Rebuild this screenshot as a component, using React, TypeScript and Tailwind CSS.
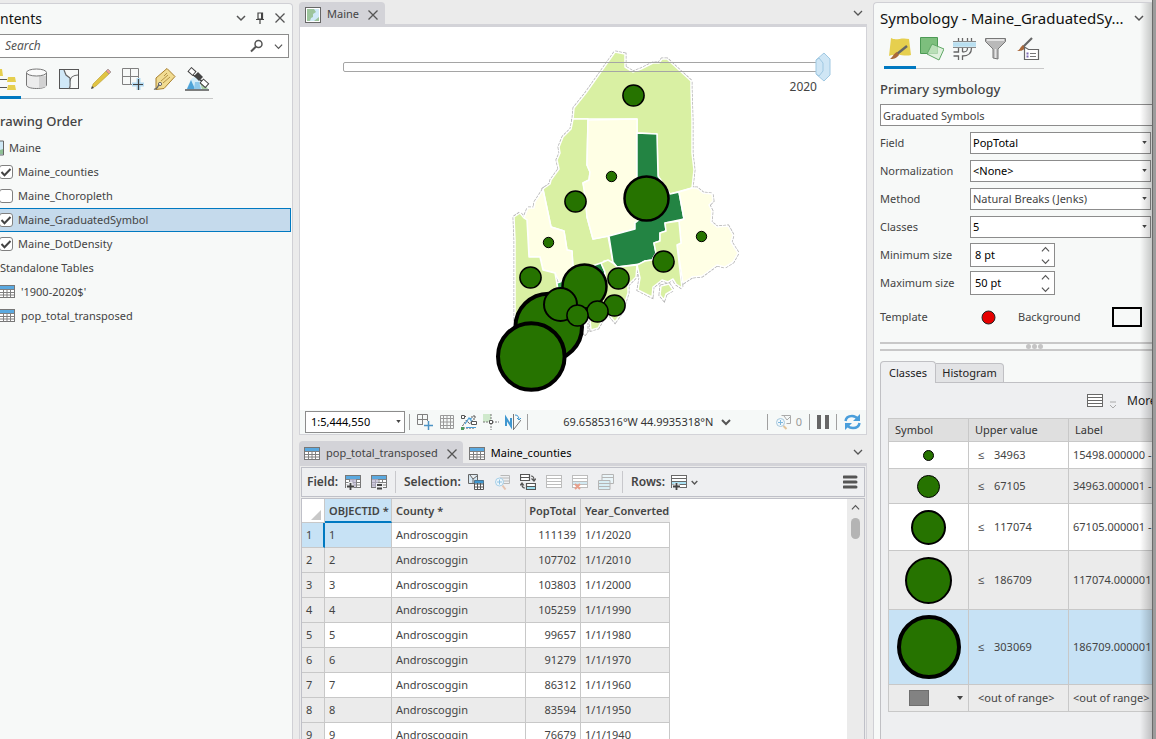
import type { ReactNode } from "react";

type Circle = { cx: number; cy: number; r: number; w: number };

const LAYERS = [
  { name: "Maine_counties", visible: true, selected: false },
  { name: "Maine_Choropleth", visible: false, selected: false },
  { name: "Maine_GraduatedSymbol", visible: true, selected: true },
  { name: "Maine_DotDensity", visible: true, selected: false },
];

const TABLES = ["'1900-2020$'", "pop_total_transposed"];

const ROWS = [
  { total: "111139", date: "1/1/2020" },
  { total: "107702", date: "1/1/2010" },
  { total: "103803", date: "1/1/2000" },
  { total: "105259", date: "1/1/1990" },
  { total: "99657", date: "1/1/1980" },
  { total: "91279", date: "1/1/1970" },
  { total: "86312", date: "1/1/1960" },
  { total: "83594", date: "1/1/1950" },
  { total: "76679", date: "1/1/1940" },
];

const CLASSES = [
  { size: 11, stroke: 1, upper: "34963", label: "15498.000000 - 34963.000000", row: "h-[27px] bg-white" },
  { size: 23, stroke: 1, upper: "67105", label: "34963.000001 - 67105.000000", row: "h-[35px] bg-[#ebebeb]" },
  { size: 35, stroke: 2, upper: "117074", label: "67105.000001 - 117074.000000", row: "h-[47px] bg-white" },
  { size: 47, stroke: 2, upper: "186709", label: "117074.000001 - 186709.000000", row: "h-[59px] bg-[#ebebeb]" },
  { size: 64, stroke: 4, upper: "303069", label: "186709.000001 - 303069.000000", row: "h-[75px] bg-[#c7e2f5]" },
];

const CIRCLES: Circle[] = [
  { cx: 633.5, cy: 95.5, r: 10.6, w: 1.5 },
  { cx: 611.5, cy: 176.5, r: 5.2, w: 1 },
  { cx: 646.5, cy: 198.5, r: 22, w: 2.5 },
  { cx: 575.5, cy: 201.5, r: 10.6, w: 1.5 },
  { cx: 548.5, cy: 242.5, r: 5.2, w: 1 },
  { cx: 701.5, cy: 236.5, r: 5.2, w: 1 },
  { cx: 663.5, cy: 261.5, r: 10.6, w: 1.5 },
  { cx: 530.5, cy: 277.5, r: 10.6, w: 1.5 },
  { cx: 618.5, cy: 278.5, r: 10.6, w: 1.5 },
  { cx: 548.7, cy: 327, r: 33.3, w: 4 },
  { cx: 584.5, cy: 286.5, r: 22, w: 2.5 },
  { cx: 560.5, cy: 304.5, r: 16.5, w: 2 },
  { cx: 614.5, cy: 305.5, r: 10.6, w: 1.5 },
  { cx: 597.5, cy: 311.5, r: 10.6, w: 1.5 },
  { cx: 577.5, cy: 315.5, r: 10.6, w: 1.5 },
  { cx: 531.3, cy: 356.5, r: 33.3, w: 4 },
];

const COUNTIES = [
  // Aroostook
  { fill: "#d9f0a3", points: "615,52 625,54 625,67 633,72 641,69 653,63 659,63 662,59 667,59 691,81 691,88 692,120 692,153 694,170 692,188 670,194 658,176 657,134 637,133 637,119 573,119 574,108 586,93" },
  // Somerset
  { fill: "#d9f0a3", points: "573,119 588,119 587,165 590,172 589,180 583,183 587,200 587,217 593,239 608,236 613,262 604,261 602,272 573,268 572,251 567,250 564,231 551,227 543,189 550,184 551,180 559,169 557,160 560,153 559,147 563,137 571,129" },
  // Piscataquis
  { fill: "#ffffe5", points: "588,120 637,119 637,200 650,215 635,223 635,229 609,236 593,239 587,217 584,190 583,183 589,180 590,172 587,165" },
  // Penobscot
  { fill: "#238443", points: "637,133 657,134 658,176 670,194 679,192 684,219 665,223 666,231 660,233 660,241 654,243 656,253 652,260 645,261 640,264 617,267 613,262 609,236 635,229 635,223 645,215 637,200" },
  // Washington
  { fill: "#ffffe5", points: "679,192 692,188 697,188 703,193 712,194 713,201 709,205 712,211 711,222 717,227 728,226 733,235 731,242 738,253 733,262 725,267 717,265 702,276 692,277 683,283 677,245 681,243 679,221 684,219" },
  // Hancock
  { fill: "#d9f0a3", points: "665,223 679,221 681,243 677,245 682,288 676,284 673,279 668,282 662,280 653,287 652,297 638,290 640,278 637,265 645,261 652,260 656,253 654,243 660,241 660,233 666,231" },
  { fill: "#d9f0a3", points: "661,286 669,284 673,290 666,294 664,300 660,295" },
  // Franklin
  { fill: "#ffffe5", points: "543,190 551,227 564,231 567,250 572,251 573,268 560,283 555,273 543,270 540,257 529,257 527,220 524,218 528,208 534,208 535,202" },
  // Oxford
  { fill: "#d9f0a3", points: "514,217 520,213 524,218 527,220 529,257 540,257 543,270 555,273 559,295 540,330 515,320 515,240" },
  { fill: "#41ab5d", points: "557,283 563,281 566,290 558,290" },
  // Kennebec
  { fill: "#238443", points: "586,268 601,263 605,272 600,285 586,285" },
  // Waldo, Knox and Lincoln
  { fill: "#d9f0a3", points: "601,263 608,260 613,263 617,267 637,265 636,277 628,285 628,293 622,312 615,322 607,312 598,328 591,330 589,310 606,285 605,272" },
];

function Svg({ w = 16, h = 16, children }: { w?: number; h?: number; children: ReactNode }) {
  return (
    <svg width={w} height={h} viewBox={`0 0 ${w} ${h}`} fill="none" className="block shrink-0" aria-hidden="true">
      {children}
    </svg>
  );
}

function Chevron({ size = 10, up = false, width = 1.5 }: { size?: number; up?: boolean; width?: number }) {
  return (
    <svg width={size} height={size} viewBox="0 0 10 10" fill="none" stroke="#555" strokeWidth={width} className="block shrink-0" aria-hidden="true">
      <path d={up ? "M1 7l4-4 4 4" : "M1 3l4 4 4-4"} />
    </svg>
  );
}

function CloseIcon() {
  return (
    <Svg w={12} h={12}>
      <path d="M1.5 1.5l9 9M10.5 1.5l-9 9" stroke="#555" strokeWidth="1.3" />
    </Svg>
  );
}

function TableIcon({ children }: { children?: ReactNode }) {
  return (
    <Svg>
      <rect x=".5" y="1.5" width="15" height="12" fill="#fff" stroke="#777" />
      <rect x="1" y="2" width="14" height="3" fill="#5aa9e0" />
      <path d="M1 5.5h14M1 8.500h14M1 11h14M4.5 5v8.500M8 5v8.500M11.5 5v8.500" stroke="#808080" strokeWidth="1" />
      {children}
    </Svg>
  );
}

function ListIcon({ fill = "#fff", stroke = "#696969", children }: { fill?: string; stroke?: string; children?: ReactNode }) {
  return (
    <Svg>
      <rect x=".5" y="1.5" width="15" height="12" fill="#fff" stroke={stroke} />
      <rect x="1" y="8" width="14" height="3" fill={fill} />
      <path d="M1 4.5h14M1 7.5h14M1 10.5h14" stroke={stroke} />
      {children}
    </Svg>
  );
}

function GridPlusIcon() {
  return (
    <Svg w={24} h={24}>
      <path d="M2.5 1.5h16v16h-16zM10.5 1.5v16M2.5 9.5h16" stroke="#808080" />
      <path d="M12 17.5h12M18.5 11v12" stroke="#b5dcf3" strokeWidth="4" />
      <path d="M13 17.5h10M18.5 12v11" stroke="#444" strokeWidth="1.2" />
    </Svg>
  );
}

function IconButton({ label, children }: { label: string; children: ReactNode }) {
  return (
    <button type="button" aria-label={label} className="flex shrink-0 items-center justify-center">
      {children}
    </button>
  );
}

function Check({ id, checked }: { id: string; checked: boolean }) {
  return (
    <span className="-ml-px grid size-[14px] shrink-0 place-items-center">
      <input
        id={id}
        type="checkbox"
        defaultChecked={checked}
        className="peer col-start-1 row-start-1 size-[14px] appearance-none rounded-[3px] border border-[#808080] bg-white"
      />
      <svg width="12" height="12" viewBox="0 0 12 12" fill="none" stroke="#444" strokeWidth="2" className="pointer-events-none invisible col-start-1 row-start-1 peer-checked:visible">
        <path d="M1.5 6l3 3.2L10.5 3" />
      </svg>
    </span>
  );
}

function Contents() {
  return (
    <aside className="mt-[3px] flex w-[293px] shrink-0 flex-col overflow-hidden rounded-tr border-t border-r border-[#d0d0d5] bg-[#f7f9f8]">
      <div className="flex h-[30px] items-center pb-[2px]">
        <h2 className="flex-1 text-[14px] text-[#111]">ntents</h2>
        <div className="flex items-center gap-[9px] pr-[6px]">
          <IconButton label="Pane options"><Chevron /></IconButton>
          <IconButton label="Pin">
            <Svg w={10} h={12}>
              <path d="M3 1h4.5v6H3zM1 7.500h8M5 8v4" stroke="#444" strokeWidth="1.2" />
              <path d="M6 1h1.5v6H6z" fill="#444" />
            </Svg>
          </IconButton>
          <IconButton label="Close"><CloseIcon /></IconButton>
        </div>
      </div>

      <div className="mr-[3px] flex h-6 items-center border border-l-0 border-[#8c8c8c] bg-white pr-[5px]">
        <input aria-label="Search" placeholder="Search" className="min-w-0 flex-1 px-[5px] text-[12px] italic outline-none placeholder:text-[#555]" />
        <IconButton label="Search">
          <Svg w={14} h={14}>
            <circle cx="8.5" cy="5" r="3.5" stroke="#555" strokeWidth="1.5" />
            <path d="M6 7.500l-5 5" stroke="#555" strokeWidth="2" />
          </Svg>
        </IconButton>
        <span className="w-[10px]" />
        <IconButton label="Search options"><Chevron size={9} width={1.3} /></IconButton>
      </div>

      <div className="mt-[9px] flex w-[213px] gap-2 border-b border-[#c8c8c8] pb-[7px]">
        <button type="button" aria-label="List by drawing order" className="relative w-4">
          <Svg w={16} h={24}>
            <path d="M0 2h2l1 7H0zM8 10h7l1 5H7zM8 18h7l1 5H7z" fill="#e6cf4e" />
            <path d="M0 12.5h7M0 20.5h7" stroke="#555" />
          </Svg>
          <span className="absolute top-[29px] left-0 h-[3px] w-[21px] bg-[#0079c1]" />
        </button>
        <IconButton label="List by data source">
          <Svg w={24} h={24}>
            <path d="M2.5 6v12c0 2 4 3.500 10 3.500s10-1.500 10-3.500V6" fill="#ececec" stroke="#777" />
            <path d="M15 9h7v11l-7 1z" fill="#d2d2d2" />
            <ellipse cx="12.5" cy="5.5" rx="10" ry="3.5" fill="#fafafa" stroke="#777" />
          </Svg>
        </IconButton>
        <IconButton label="List by selection">
          <Svg w={24} h={24}>
            <rect x="3.5" y="2.5" width="19" height="19" fill="#f7f9f8" stroke="#555" />
            <path d="M4 3h4l2 5 4 3 1 4-2 6H4z" fill="#d0e8f7" />
            <path d="M8 3l2 5 4 3M13 22c2-3 1-5 1-7 0-5 4-7 8-7M14 11v4" stroke="#666" strokeWidth="1.2" />
          </Svg>
        </IconButton>
        <IconButton label="List by editing">
          <Svg w={24} h={24}>
            <path d="M4 21l1-4L18 4l3 3L8 19z" fill="#e1c443" stroke="#b89a30" strokeWidth=".6" />
            <path d="M18 4l2-2 3 3-2 2z" fill="#ef9d94" stroke="#888" strokeWidth=".6" />
            <path d="M3 22l1-3 2 2z" fill="#444" />
          </Svg>
        </IconButton>
        <IconButton label="List by snapping"><GridPlusIcon /></IconButton>
        <IconButton label="List by labeling">
          <Svg w={24} h={24}>
            <path d="M4 11L15 1.5l8 8L12 21.5l-8 1z" fill="#f1dc92" stroke="#a77f2c" />
            <path d="M9 14l7-6M11 16l7-6M12 9l3-3" stroke="#b59445" />
            <circle cx="8" cy="17" r="1.6" fill="#fff" stroke="#666" />
            <path d="M2 22c2 1 4-2 5-5" stroke="#666" strokeWidth="1.2" />
          </Svg>
        </IconButton>
        <IconButton label="List by perspective imagery">
          <Svg w={26} h={24}>
            <path d="M2 23L7 12l5-3 6 5 7 9z" fill="#d5edf9" />
            <path d="M3 22l4-9 4 9z" fill="#4da3d8" />
            <path d="M10 22l1-7h4l2 7z" fill="#8fc9ec" />
            <path d="M18 22l-2-7 4 2 4 5z" fill="#a9cfa5" />
            <path d="M1 23h24" stroke="#555" strokeWidth="1.5" />
            <path d="M10 9l4-4 5 5-4 4z" fill="#444" />
            <path d="M9 8l3 2M16 13l4 2" stroke="#444" strokeWidth="1.5" />
            <rect x="-3" y="-2.5" width="6" height="5" transform="translate(8 4.500) rotate(42)" fill="#fff" stroke="#444" />
            <rect x="-3" y="-2.5" width="7" height="5" transform="translate(20 16) rotate(42)" fill="#fff" stroke="#444" />
          </Svg>
        </IconButton>
      </div>

      <h3 className="mt-[11px] flex h-6 items-center text-[13px] font-medium text-[#444]">rawing Order</h3>
      <ul className="text-[11px] text-[#444]">
        <li className="mt-[2px] flex h-6 items-center gap-[5px]">
          <Svg w={4}>
            <path d="M0 1h3.5v14H0" fill="#cfe8f5" stroke="#666" />
            <path d="M0 10l3-1v5H0z" fill="#8fc095" />
          </Svg>
          Maine
        </li>
        {LAYERS.map((layer) => (
          <li
            key={layer.name}
            className={
              layer.selected
                ? "mr-px flex h-6 items-center gap-[5px] border border-l-0 border-[#0079c1] bg-[#c5daec]"
                : "flex h-6 items-center gap-[5px]"
            }
          >
            <Check id={layer.name} checked={layer.visible} />
            <label htmlFor={layer.name}>{layer.name}</label>
          </li>
        ))}
        <li className="flex h-6 items-center">Standalone Tables</li>
        {TABLES.map((table) => (
          <li key={table} className="-ml-px flex h-6 items-center gap-[6px]">
            <TableIcon />
            {table}
          </li>
        ))}
      </ul>
    </aside>
  );
}

function Divider() {
  return <span className="h-4 w-px shrink-0 bg-[#a0a0a0]" />;
}

function SelectArrow() {
  return (
    <svg width="5" height="3" viewBox="0 0 6 4" className="pointer-events-none absolute top-[9px] right-1" aria-hidden="true">
      <path d="M0 0h6L3 4z" fill="#444" />
    </svg>
  );
}

function MapView() {
  return (
    <section className="shrink-0">
      <div className="flex h-6 items-center justify-between pt-[2px] pr-1">
        <div className="flex h-full items-center gap-[6px] rounded-t bg-[#d3d3d8] px-[6px] pt-[3px] text-[11px] text-[#444]">
          <Svg>
            <rect x=".5" y=".5" width="15" height="15" fill="#fff" stroke="#666" />
            <rect x="2" y="2" width="12" height="12" fill="#9cc49c" />
            <path d="M9 2h5v8l-5 4H5l1-3 2-1V7l3-2z" fill="#cfe9f8" />
          </Svg>
          <button type="button" className="mr-[2px]">Maine</button>
          <IconButton label="Close Maine"><CloseIcon /></IconButton>
        </div>
        <IconButton label="View list"><Chevron width={1.3} /></IconButton>
      </div>
      <div className="border border-t-[3px] border-[#d3d3d8] bg-white">
        <div className="relative h-[383px]">
          <svg viewBox="300 27 566 383" className="block h-full w-full" aria-label="Map of Maine">
            {COUNTIES.map((c) => (
              <polygon key={c.points} points={c.points} fill="none" stroke="#b4b4b4" strokeWidth="3" strokeDasharray="3 1" />
            ))}
            {COUNTIES.map((c) => (
              <polygon key={c.points} points={c.points} fill={c.fill} stroke="#fff" strokeWidth="1.5" strokeLinejoin="round" />
            ))}
            <path d="M580 330l5 6 3-4v-9" stroke="#aaa" strokeDasharray="3 1" fill="none" />
            {CIRCLES.map((c) => (
              <circle key={`${c.cx}-${c.cy}`} cx={c.cx} cy={c.cy} r={c.r} fill="#267300" stroke="#000" strokeWidth={c.w} />
            ))}
          </svg>
          <div className="absolute inset-x-[6px] top-[6px] h-[65px]">
            <input
              type="range"
              aria-label="Time"
              min={1900}
              max={2020}
              defaultValue={2020}
              className="absolute top-[29px] right-[30px] left-[37px] h-[10px] appearance-none rounded-[2px] border border-[#a5a5a5] bg-transparent [&::-webkit-slider-thumb]:opacity-0"
            />
            <span className="absolute top-[19px] right-[28px]">
              <Svg w={18} h={30}>
                <path d="M10 1l6 6v16l-6 6-8-7V8z" fill="#cfe6f5" stroke="#9fc8e2" />
                <path d="M2 8l3-2 4 5v8l-4 5-3-2" stroke="#9fc8e2" />
              </Svg>
            </span>
            <span className="absolute top-[45px] right-[43px] text-[12px] text-[#444]">2020</span>
          </div>
        </div>
        <div className="flex h-6 items-center bg-[#f6f9f8] px-[5px] text-[11px] text-[#333]">
          <div className="relative w-[100px] shrink-0">
            <select aria-label="Map scale" className="h-[22px] w-full appearance-none border border-[#8c8c8c] bg-white px-[5px] text-[11px] text-black">
              <option>1:5,444,550</option>
            </select>
            <SelectArrow />
          </div>
          <div className="ml-1 flex items-center gap-[6px]">
            <Divider />
            <IconButton label="Grid">
              <Svg w={17}>
                <path d="M1.5 .5h10v10h-10zM6.5 .5v10M1.5 5.500h10" stroke="#808080" />
                <path d="M7 11.5h9M12 7v9" stroke="#f6f9f8" strokeWidth="4" />
                <path d="M8 11.5h9M12.5 7v9" stroke="#4c93c4" strokeWidth="1.5" />
              </Svg>
            </IconButton>
            <IconButton label="Snapping grid">
              <Svg>
                <path d="M1.5 1.5h13v13h-13zM4.5 1v14M8 1v14M11.5 1v14M1 4.5h14M1 8h14M1 11.5h14" stroke="#9a9a9a" />
              </Svg>
            </IconButton>
            <IconButton label="Constraints">
              <Svg>
                <path d="M1 2.5h4M10 3h5M13 1v5M2 14h12M1.5 12l4-6 3 4 3-4" stroke="#555" strokeDasharray="2 1" />
                <path d="M4 10l4-6 4 5M8 4l3 1" stroke="#4c9fd8" strokeWidth="1.2" />
                <path d="M10.5 7.500h5v3h-5zM.5 1.5h3v3h-3z" fill="#fff" stroke="#555" />
                <path d="M0 13h3v3H0z" fill="#4d9a5b" />
                <path d="M5 13h10v1H5z" fill="#4c9fd8" />
              </Svg>
            </IconButton>
            <IconButton label="Inference">
              <Svg>
                <path d="M0 0h8v8H0z" fill="#cfe9cc" />
                <path d="M0 8h16M8 0v16" stroke="#777" strokeDasharray="2 1" />
                <path d="M6.5 6.500h3v3h-3z" stroke="#555" fill="#fff" />
              </Svg>
            </IconButton>
            <IconButton label="Correct to north">
              <Svg>
                <path d="M1 12V4l5 8V4" stroke="#3f97d0" strokeWidth="2" />
                <path d="M8.5 0v16M9 15l7-9" stroke="#777" />
                <path d="M10 1c3 0 4 2 4 5M12 4l2 2 2-2" stroke="#3f97d0" />
              </Svg>
            </IconButton>
            <Divider />
          </div>
          <div className="flex flex-1 items-center justify-center gap-2">
            69.6585316°W 44.9935318°N
            <IconButton label="Coordinate format"><Chevron width={2} /></IconButton>
          </div>
          <div className="flex items-center gap-[7px]">
            <Divider />
            <span className="flex items-center gap-1 text-[#999]">
              <Svg w={17}>
                <path d="M6.5 1.5h9v8h-4M9 2l3 4 3-3" stroke="#aaa" />
                <circle cx="5.5" cy="8.5" r="4" fill="#f1f8fc" stroke="#a6c7dc" />
                <path d="M3 8.500h5M5.5 6v5" stroke="#7fb8dc" />
                <path d="M8.5 12l3 3" stroke="#e2c49a" strokeWidth="2" />
              </Svg>
              0
            </span>
            <Divider />
            <IconButton label="Pause drawing">
              <Svg w={12}><path d="M0 1h4v14H0zM8 1h4v14H8z" fill="#666" /></Svg>
            </IconButton>
            <Divider />
            <IconButton label="Refresh">
              <Svg w={17}>
                <path d="M1.5 7C2 3.500 5 2 8 2s4.500 1 6 3M15.5 9c-.5 3.500-3.500 5-6.500 5s-4.500-1-6-3" stroke="#4a9edb" strokeWidth="2.5" />
                <path d="M16 0v7H9zM1 16V9h7z" fill="#4a9edb" />
              </Svg>
            </IconButton>
          </div>
        </div>
      </div>
    </section>
  );
}

function AttributeTable() {
  return (
    <section className="mt-[6px] flex min-h-0 flex-1 flex-col">
      <div className="flex h-[22px] shrink-0 items-center pr-1 text-[11px]">
        <div className="flex h-full items-center gap-[6px] rounded-t bg-[#d3d3d8] px-[5px] pt-[3px] text-[#444]">
          <TableIcon />
          <button type="button" className="mr-[2px]">pop_total_transposed</button>
          <IconButton label="Close pop_total_transposed"><CloseIcon /></IconButton>
        </div>
        <button type="button" className="ml-[6px] flex items-center gap-[6px] pt-[3px] text-black">
          <TableIcon />
          Maine_counties
        </button>
        <span className="flex-1" />
        <IconButton label="Table list"><Chevron width={1.3} /></IconButton>
      </div>

      <div className="flex min-h-0 flex-1 flex-col border border-t-[3px] border-b-0 border-[#d3d3d8] px-px pt-px">
        <div className="flex h-[30px] shrink-0 items-center border border-[#bfc0c8] bg-[#eeeff1] px-[5px] text-[12px] font-semibold text-[#444]">
          <span className="w-[38px]">Field:</span>
          <div className="flex gap-[10px]">
            <IconButton label="Add field">
              <TableIcon>
                <path d="M5 5h6v8H5z" fill="#b9b4cf" fillOpacity=".7" />
                <path d="M1 12.5h8M5.5 8v8" stroke="#eeeff1" strokeWidth="4" />
                <path d="M2 12.5h7M5.5 9v7" stroke="#444" strokeWidth="1.8" />
              </TableIcon>
            </IconButton>
            <IconButton label="Calculate field">
              <TableIcon>
                <path d="M1 5h6v8H1z" fill="#b9b4cf" fillOpacity=".7" />
                <path d="M5 9h7v7H5z" fill="#eeeff1" />
                <path d="M6 11h5M6 14.5h5" stroke="#444" strokeWidth="1.8" />
              </TableIcon>
            </IconButton>
          </div>
          <span className="mx-2 h-[22px] w-px bg-[#c8c8cc]" />
          <span className="w-[64px]">Selection:</span>
          <div className="flex gap-[10px]">
            <IconButton label="Select by attributes">
              <Svg>
                <path d="M.5 .5h9v9h-9zM2 1l3 4 4-3M5 5v4" fill="#d6e9f5" stroke="#666" />
                <path d="M6.5 6.500h9v9h-9z" fill="#fff" stroke="#555" />
                <path d="M6.5 6.500h9v3h-9z" fill="#3f97d0" />
                <path d="M6 10h10M6 13h10M9.5 9v7M12.5 9v7" stroke="#555" />
              </Svg>
            </IconButton>
            <IconButton label="Zoom to selection">
              <Svg>
                <path d="M6.5 1.5h9v8h-9M6 4h9M6 7h9" stroke="#b8b8b8" />
                <circle cx="5.5" cy="8" r="4" fill="#eef6fb" stroke="#a6cfe8" />
                <path d="M3 8h5M5.5 5.500v5" stroke="#8fc2e2" />
                <path d="M8.5 11.5l3 4" stroke="#e5c3b0" strokeWidth="2" />
              </Svg>
            </IconButton>
            <IconButton label="Switch selection">
              <Svg>
                <path d="M.5 .5h9v6h-9zM.5 3.500h9M6.5 9.500h9v6h-9z" fill="#fff" stroke="#555" strokeWidth="1.2" />
                <path d="M7 12h8v3H7z" fill="#9bdcec" />
                <path d="M6.5 12.5h9" stroke="#555" />
                <path d="M11 2c3 0 3 2 3 4M11.5 4.500L14 7l2-2.500M5 14c-3 0-3-2-3-4M0 11.5L2 9l2 2.500" stroke="#555" strokeWidth="1.2" />
              </Svg>
            </IconButton>
            <IconButton label="Select all"><ListIcon stroke="#bdbdbd" /></IconButton>
            <IconButton label="Clear selection">
              <ListIcon stroke="#bdbdbd" fill="#d2e9f2">
                <path d="M3 10l5 5M8 10l-5 5" stroke="#e8a08c" strokeWidth="2" />
              </ListIcon>
            </IconButton>
            <IconButton label="Copy rows">
              <Svg>
                <path d="M4 .5h11.5v9H4zM4 3.500h11.5" fill="#eaf5f9" stroke="#b5b5b5" />
                <path d="M.5 6.500H12v9H.5zM.5 9.500H12M.5 12.5H12" fill="#d8eef5" stroke="#b5b5b5" />
              </Svg>
            </IconButton>
          </div>
          <span className="mx-2 h-[22px] w-px bg-[#c8c8cc]" />
          <span className="w-[40px]">Rows:</span>
          <IconButton label="Add row">
            <ListIcon fill="#a9e0f2">
              <path d="M1 12.5h8M5.5 9v7" stroke="#eeeff1" strokeWidth="4" />
              <path d="M2 12.5h7M5.5 9v7" stroke="#444" strokeWidth="1.8" />
            </ListIcon>
          </IconButton>
          <span className="w-1" />
          <IconButton label="Row options"><Chevron size={7} width={2} /></IconButton>
          <span className="flex-1" />
          <IconButton label="Menu">
            <Svg w={16} h={14}><path d="M1 2h12M1 7h12M1 12h12" stroke="#555" strokeWidth="3" strokeLinecap="round" /></Svg>
          </IconButton>
        </div>

        <div className="mt-px flex min-h-0 flex-1 overflow-hidden border border-b-0 border-[#bfc0c8] bg-white">
          <div className="min-w-0 flex-1 overflow-hidden">
            <table className="w-[368px] table-fixed border-separate border-spacing-0 text-[11px] text-[#444]">
              <colgroup>
                <col className="w-[23px]" />
                <col className="w-[67px]" />
                <col className="w-[134px]" />
                <col className="w-[55px]" />
                <col className="w-[89px]" />
              </colgroup>
              <thead>
                <tr className="h-6 bg-[#ebebeb] text-left whitespace-nowrap">
                  <th className="border-r border-b border-[#c8c8c8] bg-white p-0" aria-label="Row">
                    <svg width="10" height="10" viewBox="0 0 10 10" className="mt-2 ml-auto mr-[3px]" aria-hidden="true">
                      <path d="M10 0v10H0z" fill="#c8c8c8" />
                    </svg>
                  </th>
                  <th className="border-r border-b-2 border-r-[#c8c8c8] border-b-[#0079c1] bg-[#c7e2f5] p-0 pt-[3px] pl-1 font-semibold">OBJECTID *</th>
                  <th className="border-r border-b border-[#c8c8c8] p-0 pt-[2px] pl-1 font-semibold">County *</th>
                  <th className="border-r border-b border-[#c8c8c8] p-0 pt-[2px] pr-1 text-right font-semibold">PopTotal</th>
                  <th className="border-b border-[#c8c8c8] p-0 pt-[2px] pl-1 font-semibold">Year_Converted</th>
                </tr>
              </thead>
              <tbody>
                {ROWS.map((row, i) => (
                  <tr key={row.date} className={i % 2 ? "h-[25px] bg-[#ebebeb]" : "h-[25px] bg-white"}>
                    <td
                      className={
                        i === 0
                          ? "border-r-2 border-b border-r-[#0079c1] border-b-[#c8c8c8] bg-[#c7e2f5] p-0 pl-1"
                          : "border-r border-b border-[#c8c8c8] bg-[#ebebeb] p-0 pl-1"
                      }
                    >
                      {i + 1}
                    </td>
                    <td className={i === 0 ? "border-r border-b border-[#c8c8c8] bg-[#c7e2f5] p-0 pl-1" : "border-r border-b border-[#c8c8c8] p-0 pl-1"}>
                      {i + 1}
                    </td>
                    <td className="border-r border-b border-[#c8c8c8] p-0 pl-1">Androscoggin</td>
                    <td className="border-r border-b border-[#c8c8c8] p-0 pr-1 text-right">{row.total}</td>
                    <td className="border-r border-b border-[#c8c8c8] p-0 pl-1">{row.date}</td>
                  </tr>
                ))}
              </tbody>
            </table>
          </div>
          <div className="flex w-[17px] shrink-0 flex-col items-center bg-[#ebebeb] pt-1">
            <Chevron size={9} up width={1.3} />
            <span className="mt-[6px] h-[21px] w-[9px] rounded-full bg-[#b4b4b4]" />
          </div>
        </div>
      </div>
    </section>
  );
}

function SelectRow({ id, label, value, muted }: { id: string; label: string; value: string; muted?: boolean }) {
  return (
    <div className="flex h-7 items-center">
      <label htmlFor={id} className="w-[90px] shrink-0">{label}</label>
      <div className="relative mr-px flex-1">
        <select
          id={id}
          className={
            muted
              ? "h-[22px] w-full appearance-none border border-[#8c8c8c] bg-white px-[2px] text-[#444]"
              : "h-[22px] w-full appearance-none border border-[#8c8c8c] bg-white px-[2px] text-black"
          }
        >
          <option>{value}</option>
        </select>
        <SelectArrow />
      </div>
    </div>
  );
}

function SizeRow({ id, label, value }: { id: string; label: string; value: string }) {
  return (
    <div className="flex h-7 items-center">
      <label htmlFor={id} className="w-[90px] shrink-0">{label}</label>
      <div className="flex h-6 w-[85px] items-center border border-[#8c8c8c] bg-white pr-1">
        <input id={id} defaultValue={value} className="min-w-0 flex-1 px-1 text-black outline-none" />
        <div className="flex flex-col gap-[3px]">
          <IconButton label={`Increase ${label}`}><Chevron size={9} up width={1.3} /></IconButton>
          <IconButton label={`Decrease ${label}`}><Chevron size={9} width={1.3} /></IconButton>
        </div>
      </div>
    </div>
  );
}

function Symbology() {
  return (
    <aside className="relative mt-[2px] flex w-[279px] shrink-0 flex-col overflow-hidden rounded-tl border-t border-l border-[#d0d0d5] bg-[#f7f9f8] pl-[6px] text-[11px] text-[#444]">
      <div className="flex h-[32px] items-center justify-between pr-2 pb-[2px]">
        <h2 className="text-[15px] whitespace-nowrap text-[#111]">Symbology - Maine_GraduatedSy...</h2>
        <IconButton label="Pane options"><Chevron /></IconButton>
      </div>

      <div className="ml-1 flex w-[160px] gap-2 border-b border-[#c8c8c8] pb-[7px]">
        <button type="button" aria-label="Primary symbology" className="relative pl-1">
          <Svg w={24} h={26}>
            <path d="M3 3c5 3 10-1 18 1l2 16c-6 2-13-2-22 1z" fill="#e6cf4e" />
            <path d="M19 11L9 19" stroke="#666" strokeWidth="2.5" />
            <path d="M9 17l2 3c-3 4-6 4-9 4 3-2 3-5 7-7z" fill="#a9683a" />
          </Svg>
          <span className="absolute top-[31px] left-0 h-[3px] w-8 bg-[#0079c1]" />
        </button>
        <IconButton label="Vary symbology">
          <Svg w={24} h={26}>
            <path d="M.5 2.5h17v16H.5z" fill="#7dbf7d" stroke="#4d9a55" />
            <path d="M12 9l12 5-5 11-12-6z" fill="#d3ecd0" fillOpacity=".7" stroke="#5fa765" />
          </Svg>
        </IconButton>
        <IconButton label="Symbol layer drawing">
          <Svg w={24} h={26}>
            <path d="M6.5 3v3M10.5 3v3M15.5 3v3M19.5 3v3M6.5 13v4h-5M10.5 13v4M15.5 13c0 3-1 4-5 4M19.5 13c0 6-3 8-9 8v4M1.5 21h5v4M10.5 21" stroke="#666" strokeWidth="1.3" />
            <path d="M1 9.500h23" stroke="#b9dff0" strokeWidth="4.5" />
            <path d="M1 6.500h23M1 12.5h23" stroke="#888" />
          </Svg>
        </IconButton>
        <IconButton label="Display filters">
          <Svg w={24} h={26}>
            <path d="M1.5 3.500h20v3L14 14v10l-5-1v-9L1.5 6.500z" fill="#b9b9b9" stroke="#777" />
            <path d="M3 5h17" stroke="#e2e2e2" strokeWidth="2" />
            <path d="M11.5 14v9" stroke="#e5e5e5" strokeWidth="1.5" />
          </Svg>
        </IconButton>
        <IconButton label="Advanced options">
          <Svg w={24} h={26}>
            <path d="M16 3L7 12" stroke="#666" strokeWidth="2.2" />
            <path d="M7 10l2 3c-2 3-5 3-8 3 3-1 3-4 6-6z" fill="#a9683a" />
            <path d="M8.500 12v12.5h14v-10h-10z" fill="#fff" stroke="#666" strokeWidth="1.2" />
            <path d="M14 18.5h6M14 21.5h6" stroke="#777" />
            <path d="M10.5 17.5h2v2h-2zM10.5 20.5h2v2h-2z" fill="#7d68b5" />
          </Svg>
        </IconButton>
      </div>

      <label htmlFor="symbology" className="mt-[9px] flex h-6 items-center text-[13px] font-medium">Primary symbology</label>
      <input id="symbology" defaultValue="Graduated Symbols" className="-mr-1 mt-[2px] mb-[3px] h-[22px] border border-[#8c8c8c] bg-white px-[2px]" />

      <SelectRow id="field" label="Field" value="PopTotal" />
      <SelectRow id="normalization" label="Normalization" value="<None>" />
      <SelectRow id="method" label="Method" value="Natural Breaks (Jenks)" muted />
      <SelectRow id="classes" label="Classes" value="5" />
      <SizeRow id="min" label="Minimum size" value="8 pt" />
      <SizeRow id="max" label="Maximum size" value="50 pt" />

      <div className="flex h-10 shrink-0 items-center">
        <span className="w-[100px]">Template</span>
        <button type="button" aria-label="Template symbol" className="mr-[22px] size-4">
          <Svg><circle cx="8.5" cy="8.5" r="6.5" fill="#e60000" stroke="#222" /></Svg>
        </button>
        <span className="flex-1">Background</span>
        <button type="button" aria-label="Background symbol" className="mr-[10px] h-5 w-[30px] border-2 border-black bg-[#f7f9f8]" />
      </div>

      <div className="mt-[5px] flex h-[9px] shrink-0 items-center justify-center gap-[1px] border-y-2 border-[#c8c8c8]">
        <i className="ml-9 size-[5px] rounded-full bg-[#c4c4c4]" />
        <i className="size-[5px] rounded-full bg-[#c4c4c4]" />
        <i className="size-[5px] rounded-full bg-[#c4c4c4]" />
      </div>

      <div className="mt-[10px] flex h-[22px] shrink-0 items-end text-[#222]">
        <button type="button" className="h-full w-[56px] rounded-t border border-b-0 border-[#c0c0c4] bg-[#eeeff1] pt-px text-[11px]">Classes</button>
        <button type="button" className="h-5 w-[68px] rounded-tr border border-l-0 border-[#c0c0c4] bg-[#e2e3e5] text-[11px]">Histogram</button>
        <span className="flex-1 self-end border-b border-[#c0c0c4]" />
      </div>

      <div className="min-h-0 flex-1 overflow-hidden border-l border-[#c0c0c4] bg-[#eeeff1] pl-[7px]">
        <div className="flex h-[35px] items-center justify-end text-[12px] text-[#222]">
          <IconButton label="Class options"><ListIcon /></IconButton>
          <span className="mt-2 ml-[6px] mr-[10px]">
            <Svg w={8} h={8}><path d="M1 1h6M1 4l3 3 3-3" stroke="#aaa" /></Svg>
          </span>
          <button type="button" className="w-[25px] overflow-hidden text-left">More</button>
        </div>
        <table className="w-[400px] table-fixed border-separate border-spacing-0 border-t border-l border-[#c8c8c8]">
          <colgroup>
            <col className="w-[80px]" />
            <col className="w-[100px]" />
            <col />
          </colgroup>
          <thead>
            <tr className="h-[23px] bg-[#dfdfdf] text-left text-[#333]">
              <th className="border-r border-b border-[#c8c8c8] p-0 pl-[6px] font-normal">Symbol</th>
              <th className="border-r border-b border-[#c8c8c8] p-0 pl-[6px] font-normal">Upper value</th>
              <th className="border-b border-[#c8c8c8] p-0 pl-[6px] font-normal">Label</th>
            </tr>
          </thead>
          <tbody>
            {CLASSES.map((c) => (
              <tr key={c.upper} className={c.row}>
                <td className="border-r border-b border-[#c8c8c8] p-0">
                  <svg width={c.size} height={c.size} className="mx-auto block" aria-hidden="true">
                    <circle cx={c.size / 2} cy={c.size / 2} r={(c.size - c.stroke) / 2} fill="#267300" stroke="#000" strokeWidth={c.stroke} />
                  </svg>
                </td>
                <td className="border-r border-b border-[#c8c8c8] p-0 pl-[9px]">
                  <span className="inline-block w-4">≤</span>
                  {c.upper}
                </td>
                <td className="border-b border-[#c8c8c8] p-0 pl-1 whitespace-nowrap">{c.label}</td>
              </tr>
            ))}
            <tr className="h-[27px] bg-[#ebebeb]">
              <td className="border-r border-b border-[#c8c8c8] p-0">
                <div className="flex items-center justify-between pr-[5px] pl-5">
                  <span className="h-4 w-5 border border-[#6e6e6e] bg-[#828282]" />
                  <Svg w={6} h={4}><path d="M0 0h6L3 4z" fill="#444" /></Svg>
                </div>
              </td>
              <td className="border-r border-b border-[#c8c8c8] p-0 pl-[9px]">&lt;out of range&gt;</td>
              <td className="border-b border-[#c8c8c8] p-0 pl-1">&lt;out of range&gt;</td>
            </tr>
          </tbody>
        </table>
      </div>
      <div className="pointer-events-none absolute inset-y-0 right-0 w-3 bg-linear-to-r from-transparent to-black/20" />
    </aside>
  );
}

export default function App() {
  return (
    <div className="flex h-screen overflow-hidden bg-[#ebebeb] font-['Noto_Sans',sans-serif]">
      <Contents />
      <main className="mx-[6px] flex min-w-0 flex-1 flex-col">
        <MapView />
        <AttributeTable />
      </main>
      <Symbology />
      <div className="w-1 shrink-0 border-l border-[#6b6b6b] bg-[#9c9c9c]" />
    </div>
  );
}
